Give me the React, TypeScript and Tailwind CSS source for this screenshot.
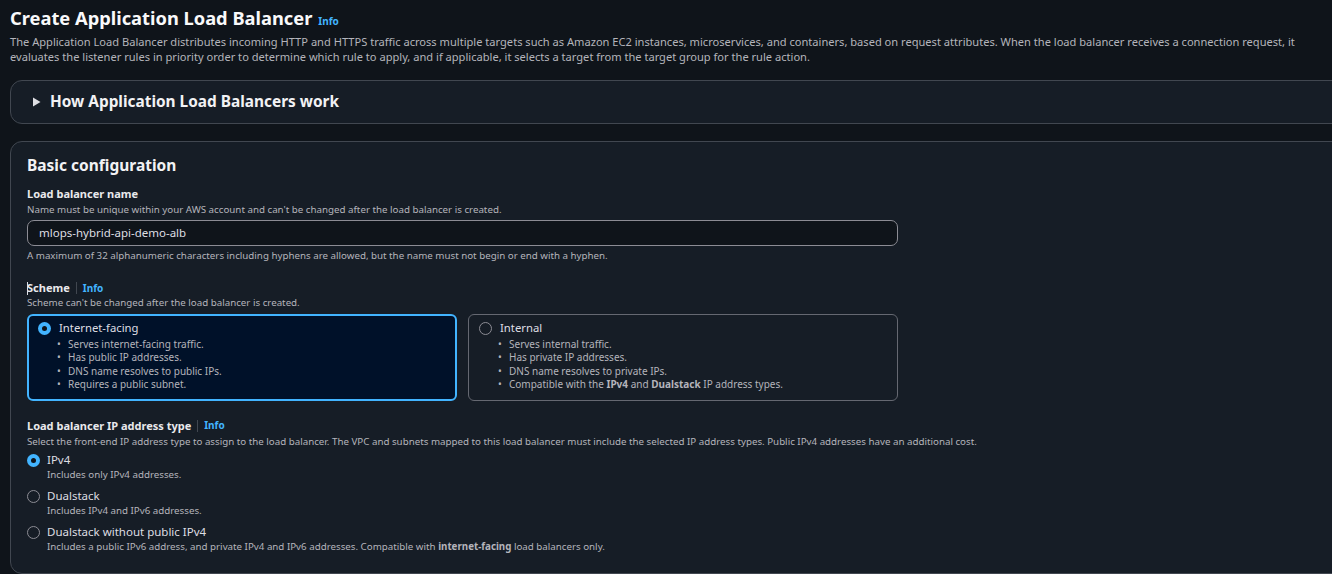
import React from "react";

const font = { fontFamily: '"Noto Sans", "Open Sans", sans-serif' };

function Info() {
  return <span className="text-[10px] font-bold text-[#42b4ff]">Info</span>;
}

function Radio({ checked }: { checked?: boolean }) {
  if (checked) {
    return (
      <span className="flex h-[13px] w-[13px] shrink-0 items-center justify-center rounded-full bg-[#42b4ff]">
        <span className="block h-[5px] w-[5px] rounded-full bg-[#0f141a]" />
      </span>
    );
  }
  return <span className="block h-[13px] w-[13px] shrink-0 rounded-full border border-[#8c8c94]" />;
}

function SchemeCard({
  title,
  checked,
  items,
}: {
  title: string;
  checked?: boolean;
  items: React.ReactNode[];
}) {
  return (
    <div
      className={
        checked
          ? "flex-1 rounded-[6px] border-2 border-[#42b4ff] bg-[#001129] px-[9px] pt-[4px] pb-[7px]"
          : "flex-1 rounded-[6px] border border-[#656871] bg-[#161d26] px-[10px] pt-[5px] pb-[8px]"
      }
    >
      <div className="flex items-center gap-[8px]">
        <Radio checked={checked} />
        <span className="text-[11.3px] text-[#dedee3]">{title}</span>
      </div>
      <ul className="mt-[1px] pl-[19px] text-[10px] leading-[13.4px] text-[#b4b4bb]">
        {items.map((it, i) => (
          <li key={i} className="flex">
            <span className="w-[11px]">•</span>
            <span>{it}</span>
          </li>
        ))}
      </ul>
    </div>
  );
}

function IpOption({
  title,
  desc,
  checked,
}: {
  title: string;
  desc: React.ReactNode;
  checked?: boolean;
}) {
  return (
    <div className="flex gap-[7px]">
      <div className="pt-[2px]">
        <Radio checked={checked} />
      </div>
      <div>
        <div className="text-[11.5px] leading-[16px] text-[#dedee3]">{title}</div>
        <div className="text-[9.75px] leading-[14px] text-[#b4b4bb]">{desc}</div>
      </div>
    </div>
  );
}

function FieldLabel({ children, info }: { children: React.ReactNode; info?: boolean }) {
  return (
    <div className="flex items-center gap-[6px]">
      <span className="text-[11px] font-bold leading-[16px] text-[#e9e9ec]">{children}</span>
      {info && (
        <>
          <span className="block h-[12px] w-px bg-[#414750]" />
          <Info />
        </>
      )}
    </div>
  );
}

export default function App() {
  return (
    <div style={font} className="h-[574px] w-full overflow-hidden bg-[#0f141a] pl-[10px] pt-[5px]">
      <div className="flex items-baseline gap-[6px]">
        <h1 className="text-[18.3px] font-bold leading-[26px] text-[#f9f9fa]">
          Create Application Load Balancer
        </h1>
        <Info />
      </div>
      <p className="mt-[3px] pr-[20px] text-[11.1px] leading-[15px] text-[#b4b4bb]">
        The Application Load Balancer distributes incoming HTTP and HTTPS traffic across multiple
        targets such as Amazon EC2 instances, microservices, and containers, based on request
        attributes. When the load balancer receives a connection request, it evaluates the listener
        rules in priority order to determine which rule to apply, and if applicable, it selects a
        target from the target group for the rule action.
      </p>

      <div className="mt-[16px] flex h-[44px] w-[1360px] items-center gap-[9px] rounded-[12px] border border-[#414750] bg-[#161d26] pl-[21px]">
        <svg width="9" height="10" viewBox="0 0 9 10">
          <path d="M1 0.5 L8.5 5 L1 9.5 Z" fill="#dedee3" />
        </svg>
        <span className="text-[15.4px] font-bold text-[#f2f2f4]">How Application Load Balancers work</span>
      </div>

      <div className="mt-[17px] w-[1360px] rounded-[12px] border border-[#414750] bg-[#161d26] pl-[16px] pt-[12px] pb-[19px]">
        <h2 className="text-[15.5px] font-bold leading-[22px] text-[#f2f2f4]">Basic configuration</h2>

        <div className="mt-[10px] w-[871px]">
          <FieldLabel>Load balancer name</FieldLabel>
          <div className="text-[9.75px] leading-[15px] text-[#b4b4bb]">
            Name must be unique within your AWS account and can't be changed after the load balancer is
            created.
          </div>
          <div className="mt-[3px] flex h-[26px] items-center rounded-[7px] border border-[#8c8c94] bg-[#0f141a] px-[11px] text-[11.5px] text-[#dedee3]">
            mlops-hybrid-api-demo-alb
          </div>
          <div className="mt-[3px] text-[9.75px] leading-[14px] text-[#b4b4bb]">
            A maximum of 32 alphanumeric characters including hyphens are allowed, but the name must not
            begin or end with a hyphen.
          </div>

          <div className="relative mt-[17px]">
            <FieldLabel info>Scheme</FieldLabel>
            <span className="absolute left-0 top-[2px] block h-[13px] w-px bg-[#dedee3]" />
          </div>
          <div className="text-[9.75px] leading-[14px] text-[#b4b4bb]">
            Scheme can't be changed after the load balancer is created.
          </div>
          <div className="mt-[4px] flex gap-[11px]">
            <SchemeCard
              checked
              title="Internet-facing"
              items={[
                "Serves internet-facing traffic.",
                "Has public IP addresses.",
                "DNS name resolves to public IPs.",
                "Requires a public subnet.",
              ]}
            />
            <SchemeCard
              title="Internal"
              items={[
                "Serves internal traffic.",
                "Has private IP addresses.",
                "DNS name resolves to private IPs.",
                <>
                  Compatible with the <b>IPv4</b> and <b>Dualstack</b> IP address types.
                </>,
              ]}
            />
          </div>
        </div>

        <div className="mt-[17px]">
          <FieldLabel info>Load balancer IP address type</FieldLabel>
        </div>
        <div className="text-[9.75px] leading-[15px] text-[#b4b4bb]">
          Select the front-end IP address type to assign to the load balancer. The VPC and subnets mapped
          to this load balancer must include the selected IP address types. Public IPv4 addresses have an
          additional cost.
        </div>
        <div className="mt-[3px] flex flex-col gap-[6px]">
          <IpOption checked title="IPv4" desc="Includes only IPv4 addresses." />
          <IpOption title="Dualstack" desc="Includes IPv4 and IPv6 addresses." />
          <IpOption
            title="Dualstack without public IPv4"
            desc={
              <>
                Includes a public IPv6 address, and private IPv4 and IPv6 addresses. Compatible with{" "}
                <b>internet-facing</b> load balancers only.
              </>
            }
          />
        </div>
      </div>
    </div>
  );
}
